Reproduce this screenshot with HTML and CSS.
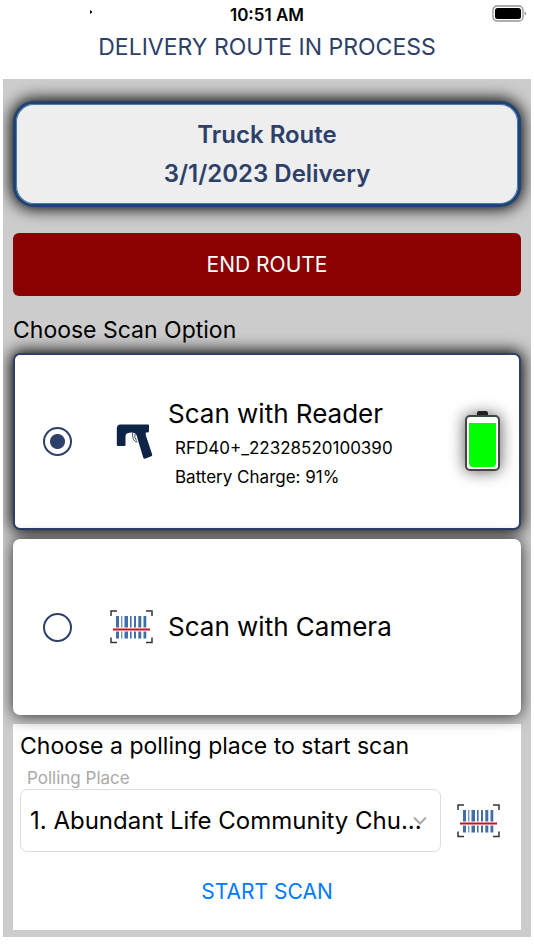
FILE: index.html
```html
<!DOCTYPE html>
<html lang="en">
  <head>
    <meta charset="utf-8" />
    <meta name="viewport" content="width=device-width, initial-scale=1" />

    <title>Delivery Route</title>

    <link rel="stylesheet" href="styles.css">
  </head>

  <body>
    <header>
      <div class="status">
        <svg class="locator" width="4" height="6" viewBox="0 0 4 6">
          <path d="M0 1 L2.5 3 L0 5 Z" />
        </svg>
        <span class="time">10:51 AM</span>
        <svg class="phoneBattery" width="35" height="18" viewBox="0 0 35 18">
          <rect x="1" y="1" width="30" height="15" rx="4" fill="none" stroke="#929292" stroke-width="1.3" />
          <rect x="3" y="3" width="26" height="11" rx="2.5" />
          <path d="M32.7 6.5 Q34.2 7 34.2 8.5 Q34.2 10 32.7 10.5 Z" fill="#929292" />
        </svg>
      </div>
      <h1>DELIVERY ROUTE IN PROCESS</h1>
    </header>

    <main>
      <section class="route">
        <p>Truck Route</p>
        <p>3/1/2023 Delivery</p>
      </section>

      <button type="button" class="endRoute">END ROUTE</button>

      <h2>Choose Scan Option</h2>

      <div class="options">
        <label class="option selected">
          <input type="radio" name="scan" checked />
          <svg class="icon" width="44" height="36" viewBox="0 0 44 36">
            <path
              d="M11.5 0.5 H39 Q40 0.5 40 1.5 V7 Q40 8.6 38.5 8.6 H36.8 Q36.5 10 37 12 L43.2 30.5 Q43.5 31.8 42.3 32.3 L36 34.7 Q34.8 35 34.3 33.7 L28.6 15 Q27.8 9.8 25.5 9 Q22 8.2 19 9 Q16.5 9.5 16.5 12 V21 Q16.5 22 15.5 22 H9 Q7.8 22 7.8 21 V4.5 Q8 0.5 11.5 0.5 Z"
              fill="#0d2446"
            />
            <path d="M23.6 9 Q23 17.5 28.5 18 M26 9.5 Q25 14 27.5 16.5" fill="none" stroke="#0d2446" stroke-width="0.8" />
          </svg>
          <span class="text">
            <span class="name">Scan with Reader</span>
            <span class="detail">RFD40+_22328520100390</span>
            <span class="detail">Battery Charge: 91%</span>
          </span>
          <span class="battery"><span class="charge" style="height: 91%"></span></span>
        </label>

        <label class="option">
          <input type="radio" name="scan" />
          <svg class="icon" width="44" height="34" viewBox="0 0 44 34">
            <g id="barcode">
              <path d="M2 6 V1 H8 M37 1 H43 V6 M2 27.5 V32.5 H8 M37 32.5 H43 V27.5" fill="none" stroke="#30343a" stroke-width="1.5" />
              <path
                d="M7 6 h3 v22.5 h-3z M12.3 6 h1 v22.5 h-1z M15.5 6 h3.5 v22.5 h-3.5z M21 6 h1.6 v22.5 h-1.6z M25 6 h2 v22.5 h-2z M29.3 6 h3 v22.5 h-3z M34.5 6 h2.8 v22.5 h-2.8z"
                fill="#416da8"
              />
              <rect x="4" y="17.5" width="37" height="4" fill="#fff" />
              <rect x="4" y="18.5" width="37" height="2" fill="#c9151e" />
            </g>
          </svg>
          <span class="text">
            <span class="name">Scan with Camera</span>
          </span>
        </label>
      </div>

      <section class="polling">
        <h2>Choose a polling place to start scan</h2>
        <label class="caption" for="pollingPlace">Polling Place</label>
        <div class="pick">
          <div class="selectBox">
            <select id="pollingPlace">
              <option>1. Abundant Life Community Chu...</option>
            </select>
            <svg class="chevron" width="14" height="9" viewBox="0 0 14 9">
              <path d="M1 1.5 L7 7.5 L13 1.5" fill="none" stroke="#a9a9a9" stroke-width="2" />
            </svg>
          </div>
          <button type="button" class="scanCode" aria-label="Scan barcode">
            <svg width="44" height="34" viewBox="0 0 44 34"><use href="#barcode" /></svg>
          </button>
        </div>
        <button type="button" class="startScan">START SCAN</button>
      </section>
    </main>
  </body>
</html>
```
FILE: styles.css
```css
* {
  box-sizing: border-box;
}

html {
  font-family: Inter, "Liberation Sans", sans-serif;
  background: #fff;
}

body {
  margin: 0 3px;
  color: #000;
}

h1,
h2,
p {
  margin: 0;
  font-weight: 400;
}

svg {
  display: block;
}

button {
  font-family: inherit;
  border: 0;
  cursor: pointer;
}

header {
  height: 79px;
}

.status {
  display: grid;
  grid-template-columns: 1fr auto 1fr;
  height: 30px;
  padding: 5px 4px 0;
}

.locator {
  margin: 4px 0 0 83px;
}

.time {
  font-size: 17px;
  font-weight: 600;
  line-height: 20px;
}

.phoneBattery {
  justify-self: end;
}

h1 {
  color: #2d4069;
  font-size: 23px;
  line-height: 34px;
  text-align: center;
}

main {
  padding: 22px 10px 7px;
  background: #ccc;
}

.route {
  padding: 11px;
  border: 3px solid #1f4374;
  border-radius: 21px;
  background: #eee;
  box-shadow: inset 0 0 0 1px #4a7aaa, 0 0 16px 2px #000;
  color: #2d4069;
  font-size: 24px;
  line-height: 39px;
  text-align: center;
}

.route p {
  font-weight: 600;
}

.endRoute {
  display: block;
  width: 100%;
  height: 63px;
  margin-top: 26px;
  border-radius: 6px;
  background: #8b0000;
  color: #fff;
  font-size: 21px;
}

h2 {
  font-size: 23px;
  line-height: 30px;
}

.endRoute + h2 {
  margin: 19px 0 8px;
}

.options {
  display: grid;
  gap: 9px;
}

.option {
  display: flex;
  align-items: center;
  height: 176px;
  padding: 0 21px 0 30px;
  border-radius: 7px;
  background: #fff;
  box-shadow: 0 1px 16px #000c;
}

.selected {
  height: 177px;
  border: 2px solid #2d4069;
  padding: 0 19px 0 28px;
  box-shadow: 0 0 16px 2px #000;
}

.option input {
  appearance: none;
  flex: none;
  width: 29px;
  height: 29px;
  margin: 0;
  border: 2px solid #2d4069;
  border-radius: 50%;
}

.option input:checked {
  background: radial-gradient(circle, #2d4069 7px, #fff 8px);
}

.icon {
  flex: none;
  margin: 0 15px 0 37px;
}

.text {
  flex: 1;
  white-space: nowrap;
}

.name,
.detail {
  display: block;
}

.name {
  font-size: 26px;
  line-height: 36px;
}

.selected .name {
  padding-top: 4px;
}

.detail {
  padding-left: 7px;
  font-size: 17px;
  line-height: 29px;
}

.name + .detail {
  margin-top: 2px;
}

.battery {
  position: relative;
  display: flex;
  align-items: flex-end;
  width: 35px;
  height: 56px;
  margin-top: 2px;
  padding: 2px;
  border: 2px solid #444;
  border-radius: 5px;
  background: #fff;
  box-shadow: 0 0 16px #000a;
}

.battery::before {
  content: "";
  position: absolute;
  top: -6px;
  left: 10px;
  width: 11px;
  height: 4px;
  border-radius: 2px 2px 0 0;
  background: #222;
}

.charge {
  width: 100%;
  border-radius: 0 0 4px 4px;
  background: #0f0;
}

.polling {
  min-height: 206px;
  margin-top: 9px;
  padding: 7px;
  background: #fff;
}

.caption {
  display: block;
  padding: 6px 7px 0;
  color: #aaa;
  font-size: 17px;
  line-height: 22px;
}

.pick {
  display: flex;
  align-items: center;
  gap: 15px;
  padding-right: 14px;
}

.selectBox {
  display: grid;
  flex: 1;
  align-items: center;
}

.selectBox > * {
  grid-area: 1 / 1;
}

select {
  appearance: none;
  width: 100%;
  height: 63px;
  padding: 0 9px;
  border: 1px solid #ddd;
  border-radius: 7px;
  background: #fff;
  color: #000;
  font-family: inherit;
  font-size: 24px;
}

.chevron {
  justify-self: end;
  margin-right: 14px;
  pointer-events: none;
}

.scanCode {
  padding: 0;
  background: none;
}

.startScan {
  display: block;
  margin: 22px auto 0;
  padding: 0 10px;
  background: none;
  color: #007aff;
  font-size: 21px;
  line-height: 36px;
}
```
